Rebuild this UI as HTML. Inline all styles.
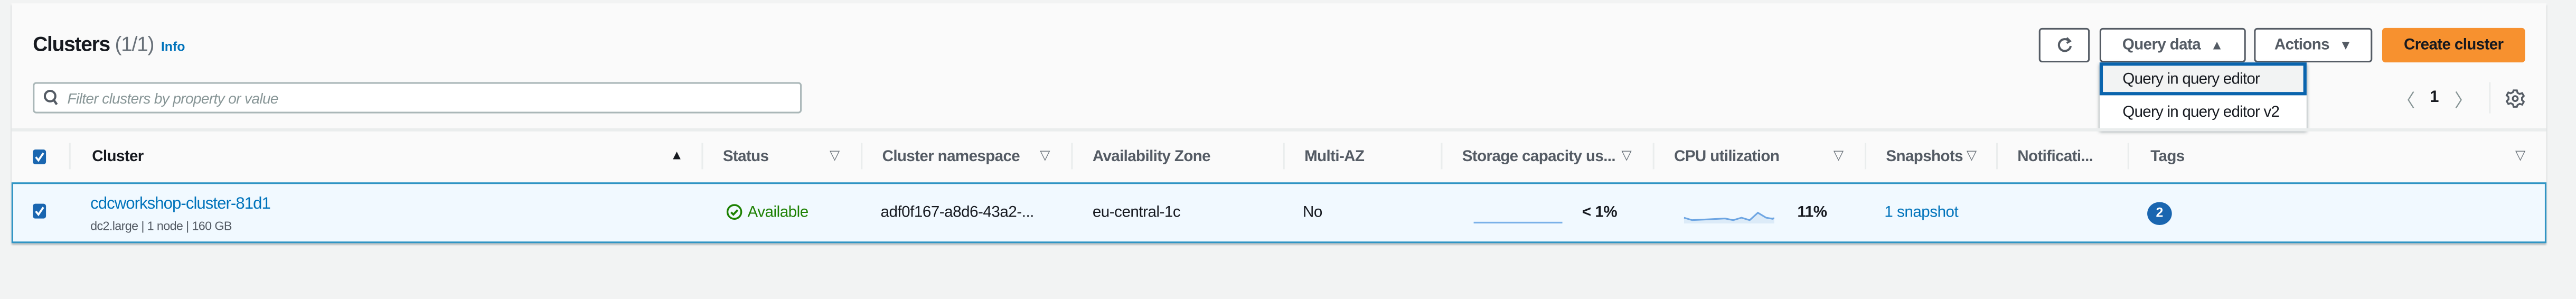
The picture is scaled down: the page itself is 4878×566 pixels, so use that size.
<!DOCTYPE html>
<html><head><meta charset="utf-8"><style>
*{box-sizing:border-box;margin:0;padding:0}
html,body{width:4878px;height:566px;overflow:hidden;background:#f2f3f3}
#w{position:absolute;left:0;top:0;width:1568px;height:182px;transform:scale(3.1110,3.1099);transform-origin:0 0;font-family:"Liberation Sans",sans-serif;color:#16191f}
.a{position:absolute;white-space:nowrap}
.card{position:absolute;left:7px;top:2px;width:1543px;height:146px;background:#fafafa;box-shadow:0 1px 1px rgba(0,28,36,.3)}
.h{font-size:9.5px;font-weight:bold;color:#545b64;top:90px;letter-spacing:-.2px}
.sep{position:absolute;top:87px;width:1px;height:16px;background:#eaeded}
.btn{position:absolute;top:17px;height:20.5px;border:1px solid #545b64;border-radius:2px;background:#fff;font-size:9.5px;font-weight:bold;color:#545b64;display:flex;align-items:center;justify-content:center;letter-spacing:-.2px}
.c{font-size:9.5px;top:124px;letter-spacing:-.15px}
.cb{position:absolute;width:8px;height:9px;background:#1a66b0;border-radius:1.5px}
</style></head><body><div id="w">
<div class="card"></div>
<div class="a" style="left:20px;top:20px;font-size:12.5px;font-weight:bold;letter-spacing:-.4px">Clusters <span style="font-weight:normal;color:#687078">(1/1)</span></div>
<div class="a" style="left:98px;top:24px;font-size:8px;font-weight:bold;color:#0073bb">Info</div>
<div class="a" style="left:20px;top:50px;width:468px;height:19px;background:#fff;border:1px solid #aab7b8;border-radius:2px"></div>
<svg class="a" style="left:26px;top:54px" width="10" height="11" viewBox="0 0 10 11"><circle cx="4.5" cy="4.5" r="3.2" fill="none" stroke="#545b64" stroke-width="1.3"/><path d="M6.8 7 L8.6 9.6" stroke="#545b64" stroke-width="1.4"/></svg>
<div class="a" style="left:41px;top:55px;font-size:9px;font-style:italic;color:#879596;letter-spacing:-.2px">Filter clusters by property or value</div>
<div class="btn" style="left:1241px;width:31px"><svg width="10" height="11" viewBox="0 0 10 11"><path d="M7.5 3 A3.6 3.6 0 1 0 8.4 6" fill="none" stroke="#545b64" stroke-width="1.3"/><path d="M6 1 L8 3 L6 4.2" fill="none" stroke="#545b64" stroke-width="1.2"/></svg></div>
<div class="btn" style="left:1278px;width:89px">Query data <span style="font-size:8px;margin-left:6px">▲</span></div>
<div class="btn" style="left:1372px;width:72px">Actions <span style="font-size:8px;margin-left:6px">▼</span></div>
<div class="btn" style="left:1450px;width:87px;background:#f7912f;border-color:#f7912f;color:#16191f">Create cluster</div>
<div class="a" style="left:1278px;top:38px;width:126px;height:40.5px;background:#fff;box-shadow:0 1px 2px rgba(0,28,36,.5)"></div>
<div class="a" style="left:1278px;top:38px;width:126px;height:20px;background:#f2f3f3;border:2px solid #0a64ad"></div>
<div class="a" style="left:1292px;top:43px;font-size:9.5px;letter-spacing:-.25px">Query in query editor</div>
<div class="a" style="left:1292px;top:63px;font-size:9.5px;letter-spacing:-.25px">Query in query editor v2</div>
<div class="a" style="left:1459px;top:53px;font-size:11px;color:#879596">〈</div>
<div class="a" style="left:1479px;top:54px;font-size:10px;font-weight:bold">1</div>
<div class="a" style="left:1494px;top:53px;font-size:11px;color:#879596">〉</div>
<div class="a" style="left:1515px;top:50px;width:1px;height:19px;background:#eaeded"></div>
<svg class="a" style="left:1525px;top:54px" width="12" height="12" viewBox="0 0 12 12"><circle cx="6" cy="6" r="1.5" fill="none" stroke="#545b64" stroke-width="1.1"/><path d="M5 1h2l.4 1.5 1.3.7 1.5-.5 1 1.7-1.1 1.1v1.4l1.1 1.1-1 1.7-1.5-.5-1.3.7L7 11H5l-.4-1.5-1.3-.7-1.5.5-1-1.7 1.1-1.1V5.1L.8 4l1-1.7 1.5.5 1.3-.7z" fill="none" stroke="#545b64" stroke-width="1.1"/></svg>
<div class="a" style="left:7px;top:78px;width:1543px;height:1.5px;background:#eaeded"></div>
<div class="cb" style="left:20px;top:91px"></div><svg class="a" style="left:20px;top:91px" width="8" height="9" viewBox="0 0 8 9"><path d="M1.8 4.6L3.4 6.6L6.4 2.2" fill="none" stroke="#fff" stroke-width="1.2"/></svg>
<div class="sep" style="left:42px"></div><div class="sep" style="left:427px"></div><div class="sep" style="left:524px"></div><div class="sep" style="left:652px"></div><div class="sep" style="left:781px"></div><div class="sep" style="left:877px"></div><div class="sep" style="left:1006px"></div><div class="sep" style="left:1135px"></div><div class="sep" style="left:1215px"></div><div class="sep" style="left:1295px"></div>
<div class="a h" style="left:56px;color:#16191f">Cluster</div><div class="a" style="left:408px;top:90px;font-size:8px">▲</div>
<div class="a h" style="left:440px">Status</div>
<div class="a h" style="left:537px">Cluster namespace</div>
<div class="a h" style="left:665px">Availability Zone</div>
<div class="a h" style="left:794px">Multi-AZ</div>
<div class="a h" style="left:890px">Storage capacity us...</div>
<div class="a h" style="left:1019px">CPU utilization</div>
<div class="a h" style="left:1148px">Snapshots</div>
<div class="a h" style="left:1228px">Notificati...</div>
<div class="a h" style="left:1309px">Tags</div>
<div class="a" style="left:505px;top:90px;font-size:8px;color:#687078">▽</div>
<div class="a" style="left:633px;top:90px;font-size:8px;color:#687078">▽</div>
<div class="a" style="left:987px;top:90px;font-size:8px;color:#687078">▽</div>
<div class="a" style="left:1116px;top:90px;font-size:8px;color:#687078">▽</div>
<div class="a" style="left:1197px;top:90px;font-size:8px;color:#687078">▽</div>
<div class="a" style="left:1531px;top:90px;font-size:8px;color:#687078">▽</div>
<div class="a" style="left:7px;top:111px;width:1543px;height:37px;background:#f1f9ff;border:1.3px solid #2f94c4"></div>
<div class="cb" style="left:20px;top:124px"></div><svg class="a" style="left:20px;top:124px" width="8" height="9" viewBox="0 0 8 9"><path d="M1.8 4.6L3.4 6.6L6.4 2.2" fill="none" stroke="#fff" stroke-width="1.2"/></svg>
<div class="a" style="left:55px;top:119px;font-size:10px;color:#0073bb;letter-spacing:-.3px">cdcworkshop-cluster-81d1</div>
<div class="a" style="left:55px;top:133px;font-size:7.5px;color:#545b64;letter-spacing:-.2px">dc2.large | 1 node | 160 GB</div>
<svg class="a" style="left:442px;top:124px" width="10" height="10" viewBox="0 0 10 10"><circle cx="5" cy="5" r="4.2" fill="none" stroke="#1d8102" stroke-width="1.1"/><path d="M3 5.2l1.4 1.4L7 3.8" fill="none" stroke="#1d8102" stroke-width="1.2"/></svg>
<div class="a c" style="left:455px;color:#1d8102">Available</div>
<div class="a c" style="left:536px">adf0f167-a8d6-43a2-...</div>
<div class="a c" style="left:665px">eu-central-1c</div>
<div class="a c" style="left:793px">No</div>
<div class="a" style="left:897px;top:134.5px;width:54px;height:1px;background:#7ab1e8"></div>
<div class="a c" style="left:963px;font-weight:bold">&lt; 1%</div>
<svg class="a" style="left:1025px;top:127px" width="55" height="10" viewBox="0 0 55 10"><path d="M0 5.5L5 7L15 6.5L25 6L30 7L35 5.5L40 7L45 2.5L50 5.5L55 5.2V9H0Z" fill="#dcebf8"/><path d="M0 5.5L5 7L15 6.5L25 6L30 7L35 5.5L40 7L45 2.5L50 5.5L54 6.2L55 5.8" fill="none" stroke="#6ea6e3" stroke-width="1"/></svg>
<div class="a c" style="left:1094px;font-weight:bold">11%</div>
<div class="a c" style="left:1147px;color:#0073bb">1 snapshot</div>
<div class="a" style="left:1307px;top:123px;width:15px;height:14px;border-radius:50%;background:#1a66b0;color:#fff;font-size:8px;font-weight:bold;text-align:center;line-height:14px">2</div>
</div></body></html>
